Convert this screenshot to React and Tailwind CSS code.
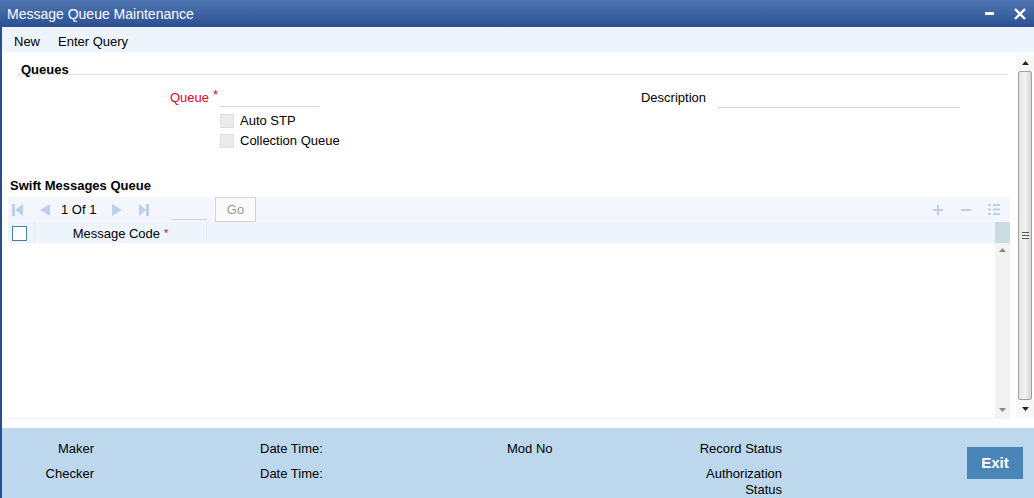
import React from "react";

// small triangle arrows used in scrollbars
const Tri = ({ up, color = "#6b6b6b" }) => (
  <svg width="7" height="4" viewBox="0 0 7 4">
    <path d={up ? "M0 4 L3.5 0 L7 4 Z" : "M0 0 L3.5 4 L7 0 Z"} fill={color} />
  </svg>
);

const NavFirst = () => (
  <svg width="11" height="12" viewBox="0 0 11 12">
    <rect x="0" y="0" width="3" height="12" fill="#bcd0ea" />
    <path d="M11 0 L3 6 L11 12 Z" fill="#bcd0ea" />
  </svg>
);
const NavPrev = () => (
  <svg width="10" height="12" viewBox="0 0 10 12">
    <path d="M10 0 L0 6 L10 12 Z" fill="#bcd0ea" />
  </svg>
);
const NavNext = () => (
  <svg width="10" height="12" viewBox="0 0 10 12">
    <path d="M0 0 L10 6 L0 12 Z" fill="#bcd0ea" />
  </svg>
);
const NavLast = () => (
  <svg width="10" height="12" viewBox="0 0 10 12">
    <path d="M0 0 L7 6 L0 12 Z" fill="#bcd0ea" />
    <rect x="7" y="0" width="3" height="12" fill="#bcd0ea" />
  </svg>
);

export default function App() {
  return (
    <div className="w-[1034px] h-[498px] flex flex-col overflow-hidden bg-white text-black text-[13px] font-['Liberation_Sans',Arial,sans-serif]">
      {/* -------- title bar -------- */}
      <div className="h-[27px] flex items-center bg-gradient-to-b from-[#5077b2] to-[#2b5093] text-white">
        <span className="pl-[7px] text-[14px] leading-none">Message Queue Maintenance</span>
        <div className="ml-auto flex items-center pr-[8px]">
          <svg width="9" height="3" viewBox="0 0 9 3">
            <rect width="9" height="3" fill="#fff" />
          </svg>
          <svg className="ml-[20px]" width="12" height="12" viewBox="0 0 12 12">
            <path d="M1 1 L11 11 M11 1 L1 11" stroke="#fff" strokeWidth="2.4" />
          </svg>
        </div>
      </div>

      <div className="flex-1 flex flex-col border-l-2 border-[#2b4d8c]">
        {/* -------- toolbar -------- */}
        <div className="h-[25px] flex items-center pt-[3px] pl-[12px] bg-[#eef4fc] leading-none">
          <span>New</span>
          <span className="ml-[18px]">Enter Query</span>
        </div>

        {/* -------- content -------- */}
        <div className="h-[376px] flex">
          <div className="flex-1 flex flex-col">
            {/* Queues section */}
            <div className="mt-[9px] ml-[16px] mr-[8px] h-[14px] border-b border-[#e4e4e4]">
              <span className="block pl-[3px] pt-[1px] font-bold leading-[16px]">Queues</span>
            </div>

            <div className="mt-[13px] flex h-[20px] leading-[20px]">
              <div className="w-[207px] text-right text-[#e4002b]">Queue</div>
              <span className="w-[11px] pl-[4px] text-[#e4002b] leading-[14px]">*</span>
              <div className="w-[99px] h-[19px] border-b border-[#d4d4d4]" />
              <div className="w-[387px] text-right">Description</div>
              <div className="ml-[12px] w-[242px] h-[20px] border-b border-[#d4d4d4]" />
            </div>

            <div className="mt-[3px] pl-[218px] flex flex-col">
              <label className="h-[20px] flex items-center">
                <span className="w-[14px] h-[14px] bg-[#ebebeb] border border-[#e0e0e0]" />
                <span className="ml-[6px]">Auto STP</span>
              </label>
              <label className="h-[20px] flex items-center">
                <span className="w-[14px] h-[14px] bg-[#ebebeb] border border-[#e0e0e0]" />
                <span className="ml-[6px]">Collection Queue</span>
              </label>
            </div>

            {/* Swift Messages Queue grid */}
            <div className="mt-[27px] pl-[8px] font-bold leading-[16px]">Swift Messages Queue</div>

            <div className="mt-[3px] mx-[6px] flex-1 flex flex-col">
              <div className="h-[25px] flex items-center bg-[#f3f7fd]">
                <span className="ml-[4px]"><NavFirst /></span>
                <span className="ml-[17px]"><NavPrev /></span>
                <span className="ml-[11px] w-[40px] leading-none">1 Of 1</span>
                <span className="ml-[11px]"><NavNext /></span>
                <span className="ml-[17px]"><NavLast /></span>
                <div className="ml-[23px] w-[35px] h-[23px] self-start border-b border-[#d0d0d0]" />
                <button className="ml-[8px] w-[41px] h-[25px] border border-[#d3d3d3] bg-[#fafafa] text-[#9a9a9a] text-[13px]">
                  Go
                </button>
                <div className="ml-auto mr-[10px] flex items-center">
                  <svg width="10" height="10" viewBox="0 0 10 10">
                    <path d="M5 0 V10 M0 5 H10" stroke="#b9cfec" strokeWidth="2" />
                  </svg>
                  <svg className="ml-[18px]" width="10" height="10" viewBox="0 0 10 10">
                    <path d="M0 5 H10" stroke="#b9cfec" strokeWidth="2" />
                  </svg>
                  <svg className="ml-[17px]" width="12" height="11" viewBox="0 0 12 11">
                    <rect x="0" y="0" width="3" height="2" fill="#b9cfec" />
                    <rect x="5" y="0" width="7" height="2" fill="#b9cfec" />
                    <rect x="0" y="4.5" width="3" height="2" fill="#b9cfec" />
                    <rect x="5" y="4.5" width="7" height="2" fill="#b9cfec" />
                    <rect x="0" y="9" width="3" height="2" fill="#b9cfec" />
                    <rect x="5" y="9" width="7" height="2" fill="#b9cfec" />
                  </svg>
                </div>
              </div>

              <div className="flex-1 flex">
                <div className="flex-1 flex flex-col">
                  <div className="h-[21px] flex bg-[#eef4fc]">
                    <div className="w-[27px] flex items-center pl-[4px] border-r border-[#e2eaf5]">
                      <span className="w-[15px] h-[15px] mt-[2px] bg-white border-[1.5px] border-[#4a7bb3]" />
                    </div>
                    <div className="w-[172px] flex items-center justify-center pt-[2px] border-r border-[#e2eaf5]">
                      <span>Message Code</span>
                      <span className="ml-[4px] text-[#e4002b] text-[11px]">*</span>
                    </div>
                  </div>
                  <div className="flex-1 bg-white" />
                </div>
                <div className="w-[15px] flex flex-col">
                  <div className="h-[21px] bg-[#c9dde2]" />
                  <div className="flex-1 bg-[#f3f3f3] flex flex-col items-center justify-between pt-[5px] pb-[6px]">
                    <Tri up color="#8a8a8a" />
                    <Tri color="#8a8a8a" />
                  </div>
                </div>
              </div>

              <div className="h-[10px] border-t border-[#eef3fa]" />
            </div>
          </div>

          {/* outer scrollbar */}
          <div className="w-[18px] flex flex-col pt-[3px] pb-[10px]">
            <div className="h-[16px] flex items-center justify-center bg-[#f7f7f7]">
              <Tri up color="#222" />
            </div>
            <div className="flex-1 mx-[2px] rounded-[2px] border border-[#a0a0a0] bg-gradient-to-r from-[#e4e4e4] via-[#f3f3f3] to-[#d4d4d4] flex items-center justify-center">
              <svg width="7" height="7" viewBox="0 0 7 7">
                <path d="M0 0.5 H7 M0 3.5 H7 M0 6.5 H7" stroke="#555" strokeWidth="1" />
              </svg>
            </div>
            <div className="h-[18px] flex items-center justify-center bg-[#f7f7f7]">
              <Tri color="#222" />
            </div>
          </div>
        </div>

        {/* -------- footer -------- */}
        <div className="h-[70px] flex bg-[#bdd8ec] leading-[16px]">
          <div className="w-[92px] pt-[13px] flex flex-col gap-[9px] text-right">
            <span>Maker</span>
            <span>Checker</span>
          </div>
          <div className="ml-[166px] w-[247px] pt-[13px] flex flex-col gap-[9px]">
            <span>Date Time:</span>
            <span>Date Time:</span>
          </div>
          <div className="w-[175px] pt-[13px]">
            <span>Mod No</span>
          </div>
          <div className="w-[100px] pt-[13px] flex flex-col gap-[9px] text-right">
            <span>Record Status</span>
            <span>Authorization Status</span>
          </div>
          <div className="ml-[185px] pt-[19px]">
            <button className="w-[56px] h-[32px] bg-[#4a85b7] text-white font-bold text-[15px]">
              Exit
            </button>
          </div>
        </div>
      </div>
    </div>
  );
}
